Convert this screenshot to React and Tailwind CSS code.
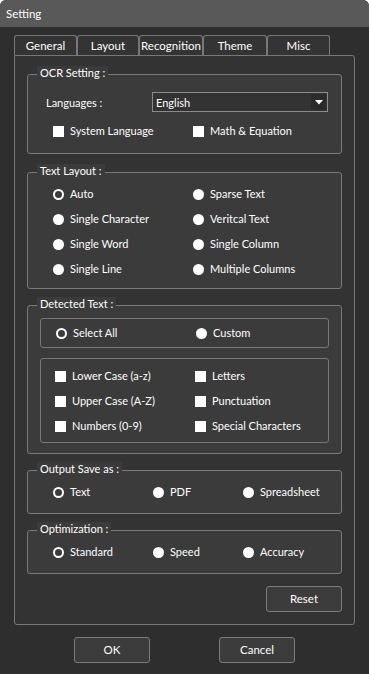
import React from 'react';

const FONT = { fontFamily: 'Lato, "Liberation Sans", sans-serif' };

const Radio = ({ checked }) => (
  checked
    ? <span className="w-[11px] h-[11px] rounded-full border-2 border-white shrink-0" />
    : <span className="w-[11px] h-[11px] rounded-full bg-white shrink-0" />
);

const Check = () => <span className="w-[11px] h-[11px] bg-white shrink-0" />;

const Option = ({ type, label, checked, width }) => (
  <div className="flex items-center gap-[6px] h-[14px]" style={width ? { width } : undefined}>
    {type === 'radio' ? <Radio checked={checked} /> : <Check />}
    <span className="leading-[14px] whitespace-nowrap">{label}</span>
  </div>
);

const Group = ({ title, className = '', children }) => (
  <div className={`border border-[#7a7a7a] rounded-[3px] bg-[#3b3b3b] ${className}`}>
    <div className="flex">
      <span className="-mt-[9px] ml-[9px] h-[14px] px-[3px] leading-[14px] bg-[#3b3b3b] whitespace-nowrap">{title}</span>
    </div>
    {children}
  </div>
);

const Btn = ({ children, className = '' }) => (
  <button className={`w-[76px] h-[26px] border border-[#7c7c7c] rounded-[3px] bg-[#3c3c3c] text-white text-[11.5px] leading-none ${className}`}>
    {children}
  </button>
);

const TABS = [
  { name: 'General', w: 'w-[63px]' },
  { name: 'Layout', w: 'w-[62px]' },
  { name: 'Recognition', w: 'w-[64px]' },
  { name: 'Theme', w: 'w-[64px]' },
  { name: 'Misc', w: 'w-[63px]' },
];

const LAYOUT_ROWS = [
  ['Auto', 'Sparse Text'],
  ['Single Character', 'Veritcal Text'],
  ['Single Word', 'Single Column'],
  ['Single Line', 'Multiple Columns'],
];

const CHAR_ROWS = [
  ['Lower Case (a-z)', 'Letters'],
  ['Upper Case (A-Z)', 'Punctuation'],
  ['Numbers (0-9)', 'Special Characters'],
];

export default function App() {
  return (
    <div className="w-[369px] h-[674px] bg-[#2e2e2e] text-white text-[11px] flex flex-col overflow-hidden rounded-t-[6px]" style={FONT}>
      {/* Title bar */}
      <div className="h-[27px] bg-[#595959] flex items-center px-[6px] shrink-0">
        <span className="leading-none text-[11.5px]">Setting</span>
      </div>

      <div className="px-[14px] pt-[8px]">
        {/* Tabs */}
        <div className="flex h-[20px]">
          {TABS.map(t => (
            <div key={t.name} className={`${t.w} h-[20px] border border-b-0 border-[#777777] rounded-t-[3px] bg-[#343434] flex items-center justify-center`}>
              <span className="leading-none text-[11.5px]">{t.name}</span>
            </div>
          ))}
        </div>

        {/* Panel */}
        <div className="w-[341px] border border-[#777777] rounded-tr-[3px] rounded-b-[3px] bg-[#333333] pt-[18px] pb-[12px] px-[12px]">

          <Group title="OCR Setting :" className="pb-[15px]">
            <div className="flex items-center mt-[12px] pl-[18px] h-[20px]">
              <span className="w-[106px] leading-none">Languages :</span>
              <div className="w-[176px] h-[20px] border border-[#8a8a8a] bg-[#333333] flex items-center p-[1px]">
                <span className="flex-1 pl-[2px] leading-none">English</span>
                <span className="w-[15px] h-full bg-[#2a2a2a] flex items-center justify-center">
                  <svg width="8" height="5" viewBox="0 0 8 5"><path d="M0 0h8L4 4.5z" fill="#fff" /></svg>
                </span>
              </div>
            </div>
            <div className="flex mt-[12px] pl-[25px]">
              <Option type="check" label="System Language" width={140} />
              <Option type="check" label="Math & Equation" />
            </div>
          </Group>

          <Group title="Text Layout :" className="mt-[18px] pb-[12px]">
            <div className="flex flex-col gap-[11px] mt-[9px] pl-[25px]">
              {LAYOUT_ROWS.map((r, i) => (
                <div key={i} className="flex">
                  <Option type="radio" label={r[0]} checked={i === 0} width={140} />
                  <Option type="radio" label={r[1]} />
                </div>
              ))}
            </div>
          </Group>

          <Group title="Detected Text :" className="mt-[16px] pb-[10px]">
            <div className="mx-[12px] mt-[7px] border border-[#777777] rounded-[3px] py-[7px] pl-[15px] flex">
              <Option type="radio" label="Select All" checked width={140} />
              <Option type="radio" label="Custom" />
            </div>
            <div className="mx-[12px] mt-[10px] border border-[#777777] rounded-[3px] pt-[10px] pb-[9px] pl-[14px] flex flex-col gap-[11px]">
              {CHAR_ROWS.map((r, i) => (
                <div key={i} className="flex">
                  <Option type="check" label={r[0]} width={140} />
                  <Option type="check" label={r[1]} />
                </div>
              ))}
            </div>
          </Group>

          <Group title="Output Save as :" className="mt-[16px] pb-[14px]">
            <div className="flex mt-[9px] pl-[25px]">
              <Option type="radio" label="Text" checked width={100} />
              <Option type="radio" label="PDF" width={90} />
              <Option type="radio" label="Spreadsheet" />
            </div>
          </Group>

          <Group title="Optimization :" className="mt-[16px] pb-[14px]">
            <div className="flex mt-[9px] pl-[25px]">
              <Option type="radio" label="Standard" checked width={100} />
              <Option type="radio" label="Speed" width={90} />
              <Option type="radio" label="Accuracy" />
            </div>
          </Group>

          <div className="flex justify-end mt-[12px]">
            <Btn>Reset</Btn>
          </div>
        </div>

        {/* Dialog buttons */}
        <div className="flex gap-[69px] pl-[60px] mt-[12px]">
          <Btn>OK</Btn>
          <Btn>Cancel</Btn>
        </div>
      </div>
    </div>
  );
}
